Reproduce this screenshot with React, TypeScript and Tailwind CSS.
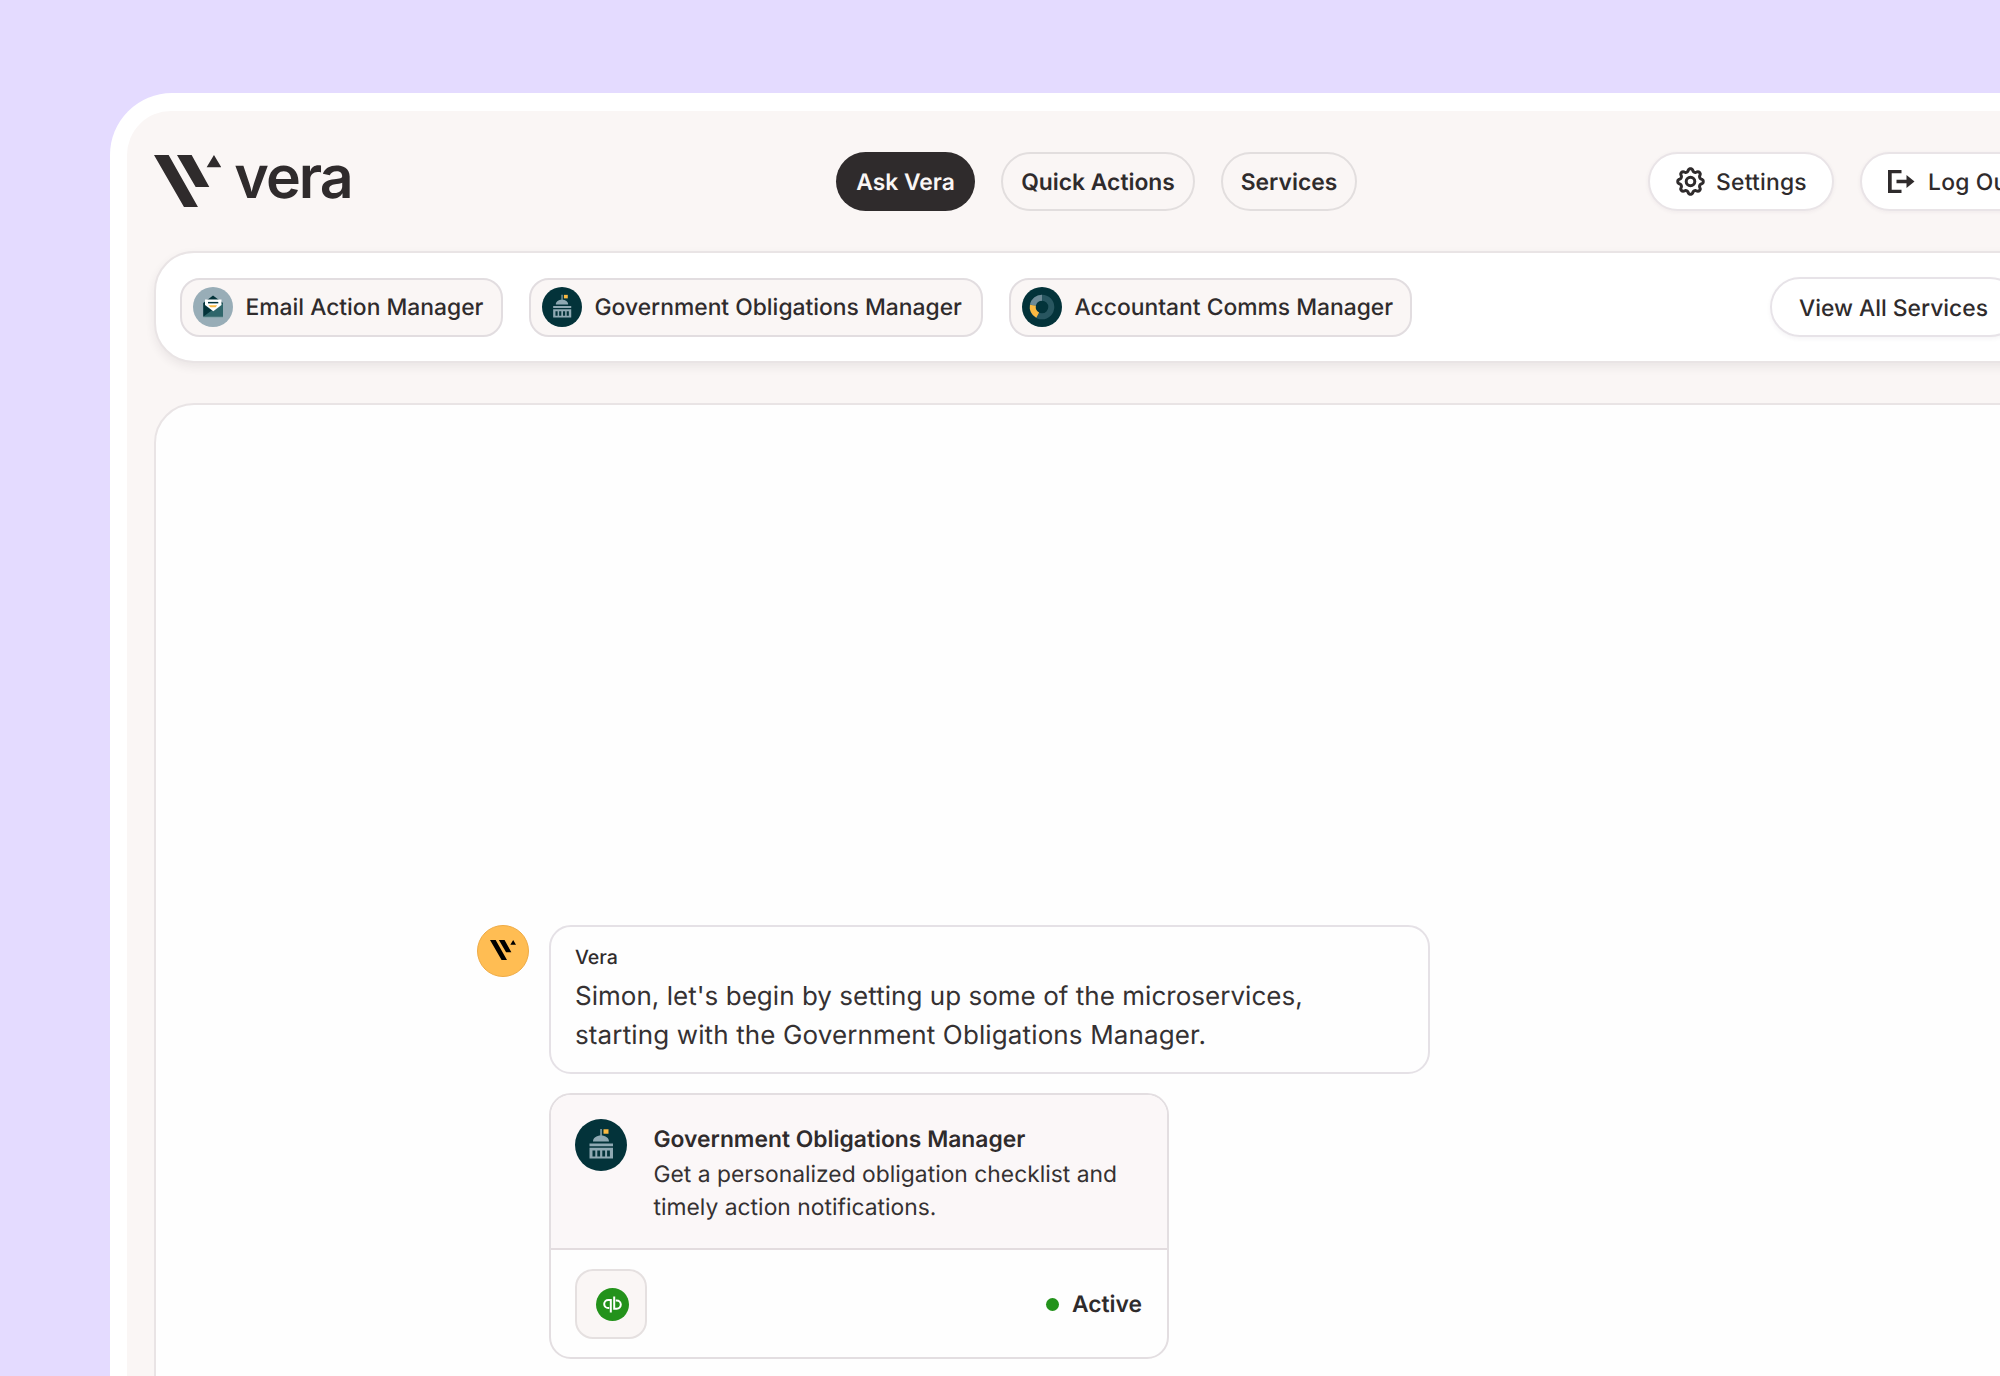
import React from "react";

const GEAR = (() => {
  const pts: string[] = [];
  for (let i = 0; i < 144; i++) {
    const t = (i / 144) * Math.PI * 2;
    const r = 11.4 + 1.5 * Math.tanh(1.4 * Math.cos(8 * t));
    pts.push(`${(14.5 + r * Math.sin(t)).toFixed(2)},${(14.5 - r * Math.cos(t)).toFixed(2)}`);
  }
  return "M" + pts.join("L") + "Z";
})();

function Mark({ className }: { className: string }) {
  return (
    <svg viewBox="0 0 202 156" className={className} fill="currentColor">
      <path d="M0 0H44L132 156H90ZM69 0H113L166 96H125ZM180 0L202 37H158Z" />
    </svg>
  );
}

function Capitol({ className }: { className: string }) {
  return (
    <svg viewBox="0 0 52 52" className={className}>
      <circle cx="26" cy="26" r="26" fill="#03333a" />
      <g fill="#8fa9b3">
        <path d="M25.3 10h1.5v7h-1.5zM18 22.6c0-3.6 3.4-6 8-6s8 2.400 8 6zM14.500 24.600h23.500v2.600H14.500z" />
        <path fillRule="evenodd" d="M14.500 28.800h23.500v10.700H14.500zM17.500 31.500v6h2.800v-6zM22.300 31.500v6h2.800v-6zM27.300 31.500v6h2.800v-6zM32.100 31.500v6h2.800v-6z" />
      </g>
      <path d="M28.500 10.200h5v4.600h-5z" fill="#fbb941" />
    </svg>
  );
}

function Envelope() {
  return (
    <svg viewBox="0 0 40 40" className="mt-[-1px] size-10 shrink-0">
      <circle cx="20" cy="20" r="20" fill="#98adb7" />
      <path d="M10.200 16L20 8.600l10 7.400v13.700H10.200z" fill="#03333a" />
      <path d="M10.200 29.700L20 22.500l10-6.500v13.700z" fill="#2f666b" />
      <path d="M12 12.500h16.500v5.500l-8.200 6.200L12 18z" fill="#fff" />
      <path d="M15 14.900h10.300v1.500H15z" fill="#03333a" />
      <path d="M15.500 18.200h8.700l-1.500 2.100h-5.200z" fill="#fbb941" />
      <path d="M10.200 29.700H30v1H10.200z" fill="#7fa3a7" />
    </svg>
  );
}

function Donut() {
  return (
    <svg viewBox="0 0 40 40" className="mt-[-1px] size-10 shrink-0">
      <circle cx="20" cy="20" r="20" fill="#03333a" />
      <g fill="none" strokeWidth="6">
        <circle cx="20" cy="20" r="9.300" stroke="#285660" />
        <path d="M10.900 18.200A9.300 9.300 0 0 1 20 10.700" stroke="#6d8a96" />
        <path d="M10.900 18.200A9.300 9.300 0 0 0 15.700 28.200" stroke="#fbb941" />
      </g>
    </svg>
  );
}

function Chip({ icon, children, className }: { icon: React.ReactNode; children: string; className: string }) {
  return (
    <div className={`flex h-[59px] shrink-0 items-center gap-[12.500px] rounded-[20px] border-2 border-[#e2dde0] bg-[#faf6f5] pl-[11px] ${className}`}>
      {icon}
      <span className="text-[22.850px] font-medium">{children}</span>
    </div>
  );
}

export default function App() {
  return (
    <div className="h-[1376px] w-[2000px] overflow-hidden bg-[#e4dbff] pt-[93px] pl-[110px] font-['Inter',sans-serif] whitespace-nowrap text-[#2f2b2c] [text-rendering:geometricPrecision]">
      <div className="h-[1400px] w-[2100px] rounded-tl-[62px] bg-white pt-[18px] pl-[17px]">
        <div className="h-full rounded-tl-[44px] bg-[#faf6f5] pt-[40px] pl-[27px]">
          <header className="flex h-[60px]">
            <div className="flex w-[682px] items-start">
              <Mark className="mt-[4px] h-[52px] w-[67.300px]" />
              <span className="mt-[-9px] ml-[13px] text-[59px] leading-[72px] font-semibold tracking-[-0.033em]">vera</span>
            </div>
            <nav className="flex w-[812px] gap-[26px] pt-px text-[22.850px] font-semibold">
              <div className="flex h-[59px] w-[139px] items-center justify-center rounded-full bg-[#2f2b2c] pt-px text-[#faf6f5]">Ask Vera</div>
              <div className="flex h-[59px] w-[194px] items-center justify-center rounded-full border-2 border-[#e2dede] pt-px">Quick Actions</div>
              <div className="flex h-[59px] w-[136px] items-center justify-center rounded-full border-2 border-[#e2dede] pt-px">Services</div>
            </nav>
            <div className="flex gap-[26px] pt-px text-[22.850px] font-medium">
              <div className="flex h-[59px] w-[186px] items-center gap-[11px] rounded-full border-2 border-[#e9e4e7] bg-white pl-[26px] shadow-[0_1px_4px_rgba(60,40,70,0.06)]">
                <svg viewBox="0 0 29 29" className="mt-[-1px] size-[29px]" fill="none" stroke="currentColor" strokeWidth="3">
                  <path d={GEAR} strokeLinejoin="round" />
                  <circle cx="14.500" cy="14.500" r="4.300" />
                </svg>
                <span className="pt-px tracking-[0.010em]">Settings</span>
              </div>
              <div className="flex h-[59px] w-[190px] items-center gap-[13px] rounded-full border-2 border-[#e9e4e7] bg-white pl-[26px] shadow-[0_1px_4px_rgba(60,40,70,0.06)]">
                <svg viewBox="0 0 27 23" className="mt-[-1px] h-[23px] w-[27px]" fill="currentColor">
                  <path d="M0 0H13.500V3.300H3.700V19.700H13.500V23H0ZM8.500 9.800H18.500V5L26.500 11.500L18.500 18V13.200H8.500Z" />
                </svg>
                <span className="pt-px tracking-[0.010em]">Log Out</span>
              </div>
            </div>
          </header>

          <section className="mt-[40px] flex h-[112px] rounded-l-[40px] border-2 border-[#e9e4e5] bg-white pt-[25px] pl-[24px] shadow-[0_4px_10px_rgba(50,40,50,0.08)]">
            <div className="flex w-[1590px] gap-[26px]">
              <Chip icon={<Envelope />} className="w-[323px]">Email Action Manager</Chip>
              <Chip icon={<Capitol className="mt-[-1px] size-10 shrink-0" />} className="w-[454px]">Government Obligations Manager</Chip>
              <Chip icon={<Donut />} className="w-[403px]">Accountant Comms Manager</Chip>
            </div>
            <div className="mt-[-1px] flex h-[60px] w-[250px] items-center rounded-full border-2 border-[#e7e3e8] pt-[2px] pl-[27px] text-[22.850px] font-medium shadow-[0_2px_4px_rgba(60,40,70,0.05)]">View All Services</div>
          </section>

          <main className="mt-[40px] h-[1100px] rounded-tl-[40px] border-2 border-[#e9e4e5] bg-[#fefefe] pt-[520px] pl-[321px]">
            <div className="flex gap-[20px]">
              <div className="flex size-[52px] items-center justify-center rounded-full border border-[#efab45] bg-[#ffbd53] text-black">
                <Mark className="mb-[2px] h-[22px] w-[26px]" />
              </div>
              <div>
                <div className="h-[149px] w-[881px] rounded-[22px] border-2 border-[#e5e1e6] pt-[16px] pl-[24px]">
                  <div className="text-[19.600px] leading-[28px] font-medium">Vera</div>
                  <div className="mt-[6px] text-[26px] leading-[39.200px] text-[#353132]">
                    <div className="tracking-[0.0012em]">Simon, let's begin by setting up some of the microservices,</div>
                    <div className="tracking-[0.005em]">starting with the Government Obligations Manager.</div>
                  </div>
                </div>
                <div className="mt-[19px] h-[266px] w-[620px] overflow-hidden rounded-[22px] border-2 border-[#e3dee1]">
                  <div className="flex h-[155px] gap-[26.500px] border-b-2 border-[#e3dcdf] bg-[#fbf7f8] pt-[24px] pl-[24px]">
                    <Capitol className="size-[52px]" />
                    <div>
                      <div className="mt-[2px] text-[22.850px] leading-[36px] font-semibold">Government Obligations Manager</div>
                      <div className="mt-px text-[22.850px] leading-[33px] text-[#353132]">
                        Get a personalized obligation checklist and
                        <br />
                        timely action notifications.
                      </div>
                    </div>
                  </div>
                  <div className="flex h-[108px] items-center justify-between pr-[25px] pl-[24px]">
                    <div className="flex h-[70px] w-[72px] items-center justify-center rounded-[18px] border-2 border-[#e5e0e0] bg-[#faf6f5]">
                      <svg viewBox="0 0 33 33" className="ml-[3px] size-[33px]">
                        <circle cx="16.500" cy="16.500" r="16.500" fill="#23921b" />
                        <g fill="none" stroke="#fff" strokeWidth="2">
                          <path d="M14.800 24.500V11.900H12.300A4.100 4.100 0 0 0 12.300 20.100H13.200" />
                          <path d="M18.200 8.500V20.700H20.700A4.100 4.100 0 0 0 20.700 12.500H19.800" />
                        </g>
                      </svg>
                    </div>
                    <div className="flex items-center gap-[13px] pt-px text-[22.850px] font-semibold">
                      <span className="size-[13px] rounded-full bg-[#23921b]" />
                      Active
                    </div>
                  </div>
                </div>
              </div>
            </div>
          </main>
        </div>
      </div>
    </div>
  );
}
